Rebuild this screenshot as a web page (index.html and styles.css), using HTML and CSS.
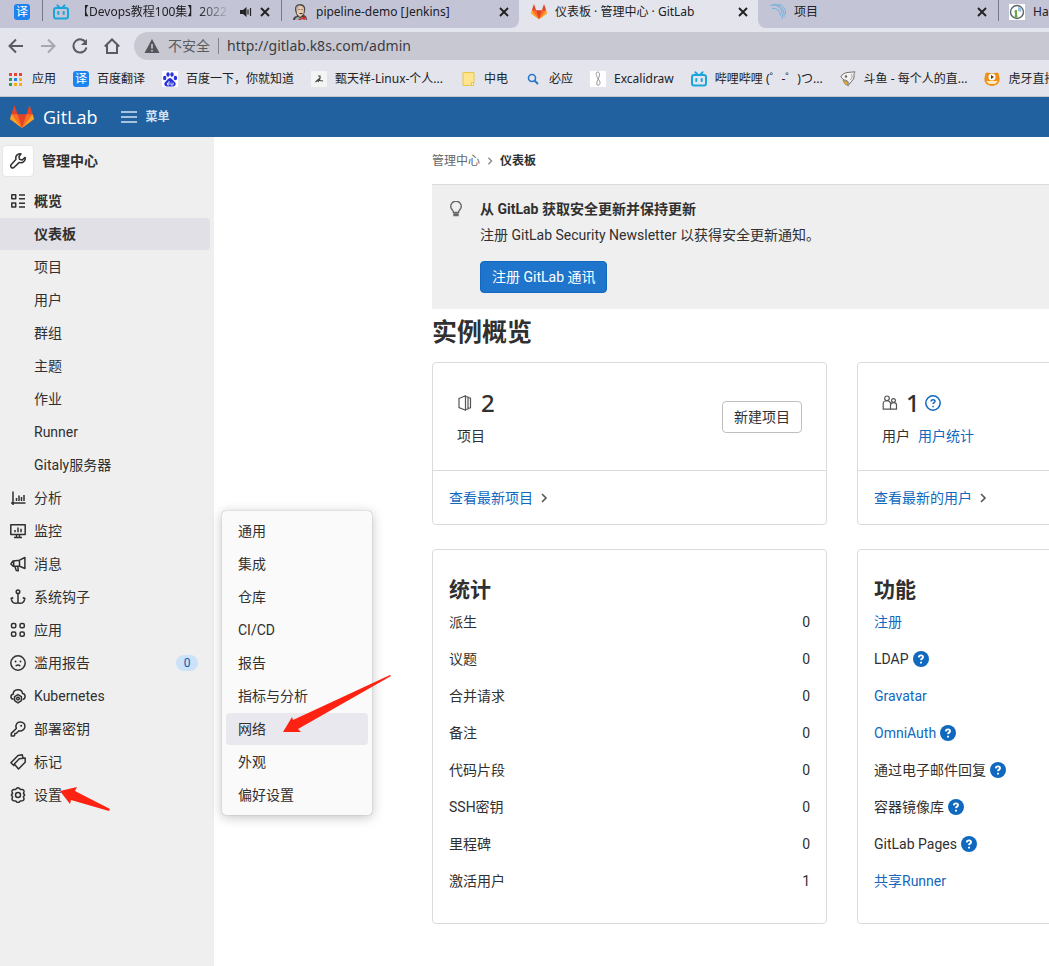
FILE: index.html
```html
<!DOCTYPE html>
<html lang="zh-CN">
<head>
<meta charset="utf-8">
<title>仪表板 · 管理中心 · GitLab</title>
<link rel="stylesheet" href="styles.css">
</head>
<body>
<svg class="sprite" aria-hidden="true">
  <symbol id="tanuki" viewBox="0 0 36 36">
    <path fill="#e24329" d="M2 14l9.38 9v-9l-4-12.28c-.2-.63-1.18-.63-1.38 0z"/>
    <path fill="#e24329" d="M34 14l-9.38 9v-9l4-12.28c.2-.63 1.18-.63 1.38 0z"/>
    <path fill="#e24329" d="M18 34.4 3 14h30z"/>
    <path fill="#fc6d26" d="M18 34.4 11.4 14H2l4 11zM18 34.4 24.6 14H34l-4 11z"/>
    <path fill="#fca326" d="M2 14 .1 20.2c-.2.6 0 1.2.5 1.5L18 34.4zM34 14l1.9 6.2c.2.6 0 1.2-.5 1.5L18 34.4z"/>
  </symbol>
  <symbol id="close" viewBox="0 0 10 10"><path d="M1 1l8 8M9 1L1 9" fill="none" stroke="#222" stroke-width="1.9"/></symbol>
  <symbol id="bili" viewBox="0 0 16 16"><g fill="none" stroke="#1aa6dc" stroke-width="2" stroke-linecap="round"><rect x="1" y="4" width="14" height="10.5" rx="2"/><path d="M4.500 1.300 6.500 3.500M11.500 1.300 9.500 3.500M5.300 8v2M10.700 8v2"/></g></symbol>
  <symbol id="chevron" viewBox="0 0 8 10"><path d="M2 1l4 4-4 4" fill="none" stroke="currentColor" stroke-width="1.6"/></symbol>
  <symbol id="wrench" viewBox="0 0 16 16"><path d="M11 .9a4.200 4.200 0 0 0-5 5.400L1.300 11.500a1.900 1.900 0 0 0 2.900 2.800L9.300 9.400a4.300 4.300 0 0 0 5.800-5L12.200 7 9.500 6.300 8.900 3.700z"/></symbol>
  <symbol id="overview" viewBox="0 0 16 16"><path d="M1.800 1.800h3.900v3.900H1.800zM1.800 10h3.900v3.900H1.800zM9 2h6M9 5.700h6M9 10.200h6M9 13.900h6"/></symbol>
  <symbol id="chart" viewBox="0 0 16 16"><path d="M3 1.500v13.500M1 13h14.500M6.500 8v3M9 5.500v5.500M11.500 7v4M14 5v6"/></symbol>
  <symbol id="monitor" viewBox="0 0 16 16"><path d="M.8 1.800h14.400v9.700H.8zM6.500 11.500v2.500M9.500 11.500v2.500M4 14.500h8M5 7v2.200M8 4.500v4.700M11 5.800v3.400"/></symbol>
  <symbol id="horn" viewBox="0 0 16 16"><path d="M14.900 1.500v11L9.700 10.300H3.200L.9 7.900 3 5l6.500-.8zM9.500 4.300v6M3.700 5.200v5M4.800 10.500l1.500 4 2 .2-.5-4"/></symbol>
  <symbol id="anchor" viewBox="0 0 16 16"><circle cx="8" cy="2.700" r="1.800"/><path d="M8 4.500v9.600M1.500 8.500v2c.3 2.500 2.500 3.800 4.500 3.800 1 0 1.500-.3 2-.8.500.5 1 .8 2 .8 2 0 4.200-1.300 4.500-3.800v-2M.6 10l2.600-1.500M15.400 10l-2.600-1.500"/></symbol>
  <symbol id="apps" viewBox="0 0 16 16"><rect x="1.500" y="1.500" width="4.300" height="4.300" rx="1.500"/><rect x="10" y="1.500" width="4.300" height="4.300" rx="1.500"/><rect x="1.500" y="10" width="4.300" height="4.300" rx="1.500"/><rect x="10" y="10" width="4.300" height="4.300" rx="1.500"/></symbol>
  <symbol id="frown" viewBox="0 0 16 16"><circle cx="8" cy="8" r="7.200"/><path d="M5.500 6.500h.1M10.400 6.500h.1" stroke-width="1.800" stroke-linecap="round"/><path d="M5.800 11.300c.6-1.600 3.800-1.600 4.400 0"/></symbol>
  <symbol id="cloud" viewBox="0 0 16 16"><path d="M3.600 11.300C.2 11 .1 6.700 3.200 6.300 3.200.6 11.800.2 12.500 5.400c3.300.3 3.600 5.300.2 6M8 6.600l3.400 2v4L8 14.900l-3.400-2.300v-4z"/><circle cx="8" cy="10.600" r="1.300"/></symbol>
  <symbol id="key" viewBox="0 0 16 16"><path d="M6.300 7.500C4.900 3.400 7.500.9 10.200.9c3 0 5 2.200 4.700 4.900-.3 2.900-3.100 4.700-6 3.900l-2.500 2.500-1.500.2-.3 1.900-1 .8H1.300v-2.700z"/><path d="M11.100 4.700h.1" stroke-width="2" stroke-linecap="round"/></symbol>
  <symbol id="labels" viewBox="0 0 16 16"><path d="M9.300 4.700 4.300 10l4.200 5 6.700-6.800V4zM12.300 6.500h.1M4.300 12 .9 8.800 8 1.400l4.300-.6.700 3.200"/></symbol>
  <symbol id="gear" viewBox="0 0 16 16"><path d="M6.500 1.500C7.300.6 8.700.6 9.500 1.500l.7.9 2.200.1c1.200.2 1.900 1.400 1.500 2.600l-.5 1.200 1.200 1.700-1.200 1.900.5 1.300c.4 1.100-.3 2.300-1.500 2.500l-2.200.2-.7.900c-.8.900-2.200.9-3 0l-.7-.9-2.200-.2C2.400 13.500 1.700 12.300 2.100 11.200l.5-1.300L1.400 8l1.200-1.700-.5-1.200C1.700 3.900 2.400 2.700 3.600 2.500l2.200-.1z"/><circle cx="8" cy="8" r="2.500"/></symbol>
  <symbol id="help" viewBox="0 0 16 16"><circle cx="8" cy="8" r="8" fill="#1068bf"/><path d="M5.800 6.300C6.100 3.500 10.400 3.900 10 6.300c-.2 1.400-1.900 1.300-2 2.800M8 10.700v1.700" fill="none" stroke="#fff" stroke-width="1.900"/></symbol>
  <symbol id="help-o" viewBox="0 0 16 16"><g fill="none" stroke="#1068bf" stroke-width="1.500"><circle cx="8" cy="8" r="7.200"/><path d="M5.900 6.500C6.200 4 10.200 4.200 10 6.400c-.2 1.300-1.900 1.300-2 2.600M8 10.700v1.600"/></g></symbol>
</svg>

<header class="browser">
  <nav class="tabs" aria-label="标签页">
    <div class="tab pinned"><span class="translate">译</span></div>
    <div class="tab">
      <svg class="i16"><use href="#bili"/></svg><span class="title long">【Devops教程100集】2022</span>
      <svg class="speaker" viewBox="0 0 12 12"><path d="M0 4h3l3.500-3v10L3 8H0z" fill="#222"/><path d="M8 3.500v5M10.500 2v8" stroke="#222" fill="none" stroke-width="1.200"/></svg>
      <button class="x" aria-label="关闭"><svg><use href="#close"/></svg></button>
    </div>
    <div class="tab last">
      <svg class="i16" viewBox="0 0 16 16"><path d="M1 16c0-3 2-4 4-4L3.500 8C2 3 4 0 8 0s6 3 5 7l-1 4c2 1 3 2 3 5z" fill="#4a4640"/><path d="M4.500 6C4 1 11.500 0 12 5l-.5 5L8 13l-3-3z" fill="#e8c9ad"/><path d="M4 5C4 2 6 1 9 1 6 2 5.500 4 5 7z" fill="#a9a49a"/><path d="M3 16c0-2 2-3 3-3l2 1 3-1c2 0 3 1 3 3z" fill="#9eb3bd"/><path d="M8 14l5-1.500V16zM8 14l-2 2h4z" fill="#cf2d2d"/><path d="M6.500 5.500h1M9.500 5.500h1M7.500 9.500h3" stroke="#333" fill="none"/></svg>
      <span class="title">pipeline-demo [Jenkins]</span><button class="x" aria-label="关闭"><svg><use href="#close"/></svg></button>
    </div>
    <div class="tab active">
      <svg class="i16"><use href="#tanuki"/></svg><span class="title">仪表板 · 管理中心 · GitLab</span><button class="x" aria-label="关闭"><svg><use href="#close"/></svg></button>
    </div>
    <div class="tab after">
      <svg class="i16" viewBox="0 0 16 16"><path d="M0 1.500c8-2.500 14 4 12 13.500M3 .5c8-.5 12 6 11 12.500M8 0c5 1 8 5 7.500 10M2 4.500c5-.5 8 2 8.500 7.500" fill="none" stroke="#6baed8" stroke-width=".9"/></svg>
      <span class="title">项目</span><button class="x" aria-label="关闭"><svg><use href="#close"/></svg></button>
    </div>
    <div class="tab">
      <svg class="i16" viewBox="0 0 16 16"><path fill="#fff" d="M0 0h16v16H0z"/><circle cx="8" cy="8" r="6.500" fill="none" stroke="#58666b" stroke-width="1.400"/><path d="M7 6v7M5.500 7.500H8M5.500 12.500h3" stroke="#69a843" stroke-width="2"/><path d="M9 3l4 1-1 4-3-1z" fill="#9bbfe0"/></svg>
      <span class="title">Ha</span>
    </div>
  </nav>
  <div class="toolbar">
    <button aria-label="后退"><svg viewBox="0 0 16 16"><path d="M15 8H2M8 1.500 1.500 8 8 14.500"/></svg></button>
    <button aria-label="前进" class="dim"><svg viewBox="0 0 16 16"><path d="M1 8h13M8 1.500 14.500 8 8 14.500"/></svg></button>
    <button aria-label="刷新"><svg viewBox="0 0 16 16"><path d="M14 5A6.600 6.600 0 1 0 14.500 9.500"/><path d="M15 1v6H9z" fill="#5a5b60" stroke="none"/></svg></button>
    <button aria-label="主页"><svg viewBox="0 0 16 16"><path d="M.8 8.500 8 1.500l7.200 7M3 7v8h10V7"/></svg></button>
    <div class="address">
      <svg class="warn" viewBox="0 0 16 16"><path d="M8 1l7.500 14H.5z" fill="#55565b"/><path d="M8 6v4.500M8 12v1.600" stroke="#c8c8d2" stroke-width="1.600"/></svg>
      <span class="unsafe">不安全</span>
      <input type="text" aria-label="地址" value="http://gitlab.k8s.com/admin">
    </div>
  </div>
  <nav class="bookmarks" aria-label="书签">
    <a href="#"><svg class="grid9" viewBox="0 0 13 13"><path d="M0 0h3v3H0zM5 0h3v3H5zM10 0h3v3h-3z" fill="#e94335"/><path d="M0 5h3v3H0zM0 10h3v3H0z" fill="#2f9e50"/><path d="M5 5h3v3H5z" fill="#2d7ff0"/><path d="M10 5h3v3h-3zM5 10h3v3H5zM10 10h3v3h-3z" fill="#f5ae13"/></svg>应用</a>
    <a href="#"><span class="translate">译</span>百度翻译</a>
    <a href="#"><svg class="i16" viewBox="0 0 16 16"><path fill="#fff" d="M0 0h16v16H0z"/><g fill="#2a32dc"><ellipse cx="2.700" cy="7" rx="1.700" ry="2.200"/><ellipse cx="6" cy="3.500" rx="1.700" ry="2.300"/><ellipse cx="10" cy="3.500" rx="1.700" ry="2.300"/><ellipse cx="13.400" cy="7" rx="1.700" ry="2.200"/><path d="M8 7c2 0 3 2.500 4.800 4 2 2 .5 4.600-2 4.400H5.200c-2.500.2-4-2.400-2-4.400C5 9.500 6 7 8 7z"/></g><path d="M7 10v4H5.500v-2H7M9 11.500V14h2v-2.500" stroke="#fff" stroke-width=".8" fill="none"/></svg>百度一下，你就知道</a>
    <a href="#"><svg class="i16" viewBox="0 0 16 16"><path fill="#f4f4f4" d="M0 0h16v16H0z"/><path d="M7 5h2v3M4.500 11 8 8l1 1.500 3 .5M8.500 8 7 11" stroke="#444" fill="none" stroke-width="1.200"/></svg>甄天祥-Linux-个人...</a>
    <a href="#"><svg class="i16" viewBox="0 0 16 16"><path d="M3 1.500h11v9.700l-1 3.300H3z" fill="#ffe58f" stroke="#e9c548"/><path d="M11.500 11.500h2v3h-2z" fill="#fff3c0" stroke="#e9c548"/></svg>中电</a>
    <a href="#"><svg class="i16" viewBox="0 0 16 16"><circle cx="7" cy="7" r="3.500" fill="none" stroke="#2777c9" stroke-width="1.600"/><path d="M9.500 9.500 13 13" stroke="#2777c9" stroke-width="2"/></svg>必应</a>
    <a href="#"><svg class="i16" viewBox="0 0 16 16"><path fill="#fff" d="M0 0h16v16H0z"/><path d="M7 1c3 0 3 2 2 5S6 11 7 14c3 1 4-2 2-5S5 3 7 1z" fill="none" stroke="#999"/></svg>Excalidraw</a>
    <a href="#"><svg class="i16"><use href="#bili"/></svg>哔哩哔哩 (゜-゜)つ...</a>
    <a href="#"><svg class="i16" viewBox="0 0 16 16"><path d="M.8 6C2 3 5 2 7 1.500L15 .8C13 3 15 5 13.500 8L9 13.500C9 10 6 9 4 9z" fill="#f2f2f2" stroke="#77706c"/><path d="M3 9.500l4 1 1.500 4.500L5 13z" fill="#f0b422" stroke="#77706c" stroke-width=".7"/><path d="M11 3c2 2 1 4-1 6" fill="none" stroke="#999"/><circle cx="6" cy="5.500" r="1.200" fill="#666"/></svg>斗鱼 - 每个人的直...</a>
    <a href="#"><svg class="i16" viewBox="0 0 16 16"><path d="M1 5c0-4 2-4 4-3h6c2-1 4-1 4 3 2 5-1 10-7 10S-1 10 1 5z" fill="#ef8f16"/><circle cx="8" cy="6" r="3.500" fill="#fff"/><path d="M7 4l3 2-3 2z" fill="#6b2d08"/><path d="M2 10h12l-3 3H5z" fill="#ffe9bd"/></svg>虎牙直播</a>
  </nav>
</header>

<header class="navbar">
  <a class="brand" href="#"><svg><use href="#tanuki"/></svg>GitLab</a>
  <button class="menu-btn"><svg viewBox="0 0 16 12"><path d="M0 1h16M0 6h16M0 11h16" stroke="currentColor" stroke-width="1.300"/></svg>菜单</button>
</header>

<div class="page">
  <aside class="sidebar">
    <a class="context" href="#"><span class="avatar"><svg class="ico"><use href="#wrench"/></svg></span>管理中心</a>
    <ul class="nav">
      <li><a href="#" class="bold"><svg class="ico"><use href="#overview"/></svg>概览</a></li>
      <li><a href="#" class="sub bold current">仪表板</a></li>
      <li><a href="#" class="sub">项目</a></li>
      <li><a href="#" class="sub">用户</a></li>
      <li><a href="#" class="sub">群组</a></li>
      <li><a href="#" class="sub">主题</a></li>
      <li><a href="#" class="sub">作业</a></li>
      <li><a href="#" class="sub">Runner</a></li>
      <li><a href="#" class="sub">Gitaly服务器</a></li>
      <li><a href="#"><svg class="ico"><use href="#chart"/></svg>分析</a></li>
      <li><a href="#"><svg class="ico"><use href="#monitor"/></svg>监控</a></li>
      <li><a href="#"><svg class="ico"><use href="#horn"/></svg>消息</a></li>
      <li><a href="#"><svg class="ico"><use href="#anchor"/></svg>系统钩子</a></li>
      <li><a href="#"><svg class="ico"><use href="#apps"/></svg>应用</a></li>
      <li><a href="#"><svg class="ico"><use href="#frown"/></svg>滥用报告<span class="badge">0</span></a></li>
      <li><a href="#"><svg class="ico"><use href="#cloud"/></svg>Kubernetes</a></li>
      <li><a href="#"><svg class="ico"><use href="#key"/></svg>部署密钥</a></li>
      <li><a href="#"><svg class="ico"><use href="#labels"/></svg>标记</a></li>
      <li class="settings"><a href="#"><svg class="ico"><use href="#gear"/></svg>设置</a>
        <ul class="flyout">
          <li><a href="#">通用</a></li>
          <li><a href="#">集成</a></li>
          <li><a href="#">仓库</a></li>
          <li><a href="#">CI/CD</a></li>
          <li><a href="#">报告</a></li>
          <li><a href="#">指标与分析</a></li>
          <li><a href="#" class="hover">网络</a></li>
          <li><a href="#">外观</a></li>
          <li><a href="#">偏好设置</a></li>
        </ul>
        <svg class="arrow arrow-long" viewBox="0 0 108 58" aria-hidden="true"><path d="M0 57 9 42l1 3L107 0l1 1L15 54l3 3z"/></svg>
        <svg class="arrow arrow-short" viewBox="0 0 50 24" aria-hidden="true"><path d="M0 4 17 0l-2 4 35 18-1 2-38-11-1 4z"/></svg>
      </li>
    </ul>
  </aside>

  <main class="main">
    <nav class="crumbs" aria-label="面包屑"><a href="#">管理中心</a><svg><use href="#chevron"/></svg><a href="#" class="here">仪表板</a></nav>
    <section class="banner">
      <svg class="bulb" viewBox="0 0 16 16"><path d="M5.500 11.500C5.500 9 2.700 8.300 2.700 5.500a5.300 5.300 0 0 1 10.600 0c0 2.800-2.800 3.500-2.800 6z"/><path d="M6 13h4v1.500H6z"/></svg>
      <div>
        <h2>从 GitLab 获取安全更新并保持更新</h2>
        <p>注册 GitLab Security Newsletter 以获得安全更新通知。</p>
        <button class="primary">注册 GitLab 通讯</button>
      </div>
    </section>
    <h1>实例概览</h1>
    <div class="cards">
      <section class="card">
        <div class="summary">
          <div>
            <div class="count"><svg viewBox="0 0 16 16"><path d="M2 3.500 8.500.8v14.400L2 12.500zM8.500 1.500 11 2v12l-2.500.5M11 2.500l2.500.8v9.400l-2.500.8"/></svg>2</div>
            <div class="label">项目</div>
          </div>
          <button class="plain">新建项目</button>
        </div>
        <div class="foot"><a href="#">查看最新项目</a><svg><use href="#chevron"/></svg></div>
      </section>
      <section class="card">
        <div class="summary">
          <div>
            <div class="count"><svg viewBox="0 0 16 16"><circle cx="5" cy="3.300" r="2.300"/><path d="M1.200 14.200V8.500C1.200 4.800 8.500 4.800 8.500 8.500v5.700z"/><circle cx="11.500" cy="5.500" r="1.900"/><path d="M8.500 14.200h6V10c0-3-5-3.300-6-.5"/></svg>1<a href="#" aria-label="帮助"><svg class="help"><use href="#help-o"/></svg></a></div>
            <div class="label">用户<a href="#">用户统计</a></div>
          </div>
        </div>
        <div class="foot"><a href="#">查看最新的用户</a><svg><use href="#chevron"/></svg></div>
      </section>
      <section class="card details">
        <h3>统计</h3>
        <dl>
          <dt>派生</dt><dd>0</dd>
          <dt>议题</dt><dd>0</dd>
          <dt>合并请求</dt><dd>0</dd>
          <dt>备注</dt><dd>0</dd>
          <dt>代码片段</dt><dd>0</dd>
          <dt>SSH密钥</dt><dd>0</dd>
          <dt>里程碑</dt><dd>0</dd>
          <dt>激活用户</dt><dd>1</dd>
        </dl>
      </section>
      <section class="card details">
        <h3>功能</h3>
        <ul>
          <li><a href="#">注册</a></li>
          <li>LDAP<a href="#" aria-label="帮助"><svg class="help"><use href="#help"/></svg></a></li>
          <li><a href="#">Gravatar</a></li>
          <li><a href="#">OmniAuth</a><a href="#" aria-label="帮助"><svg class="help"><use href="#help"/></svg></a></li>
          <li>通过电子邮件回复<a href="#" aria-label="帮助"><svg class="help"><use href="#help"/></svg></a></li>
          <li>容器镜像库<a href="#" aria-label="帮助"><svg class="help"><use href="#help"/></svg></a></li>
          <li>GitLab Pages<a href="#" aria-label="帮助"><svg class="help"><use href="#help"/></svg></a></li>
          <li><a href="#">共享Runner</a></li>
        </ul>
      </section>
    </div>
  </main>
</div>
</body>
</html>
```

FILE: styles.css
```css
* { box-sizing: border-box; }
body {
  margin: 0;
  min-height: 100vh;
  display: flex;
  flex-direction: column;
  overflow-x: hidden;
  background: #fff;
  color: #303030;
  font: 14px/20px Roboto, "Noto Sans CJK SC", sans-serif;
}
ul, dl, dd, h1, h2, h3, p { margin: 0; padding: 0; }
ul { list-style: none; }
a { color: #1068bf; text-decoration: none; }
button { font: inherit; cursor: pointer; }
svg { display: block; flex: none; }
.sprite { position: absolute; width: 0; height: 0; }
.i16 { width: 16px; height: 16px; }

/* Browser frame */
.browser {
  background: #e3e4ec;
  color: #202124;
  font: 12px/20px "Noto Sans", "Noto Sans CJK SC", sans-serif;
  border-bottom: 1px solid #c6c6cb;
  overflow: hidden;
}
.tabs { display: flex; height: 28px; overflow: hidden; }
.tab {
  flex: none;
  width: 239px;
  display: flex;
  align-items: center;
  gap: 8px;
  padding: 0 10px 4px 11px;
  background: #c4c4d7;
  border-left: 1px solid #c4c4d7;
  white-space: nowrap;
}
.tab + .tab:not(.active):not(.after) { background: linear-gradient(#777883, #777883) 0 0 / 1px 21px no-repeat #c4c4d7; }
.tab.pinned { width: 41px; padding-left: 13px; }
.tab.last { border-bottom-right-radius: 8px; }
.tab.active { background: #e3e4ec; border-color: #e3e4ec; }
.tab.after { border-bottom-left-radius: 8px; }
.tab .title { flex: 1; overflow: hidden; }
.tab .long { margin-right: 2px; mask-image: linear-gradient(90deg, #000 80%, transparent); }
.speaker { width: 12px; height: 12px; }
.x { padding: 0; border: 0; background: none; }
.x svg { width: 10px; height: 10px; }
.translate {
  width: 16px;
  height: 16px;
  border-radius: 3px;
  background: #1b84f0;
  color: #fff;
  font-size: 12px;
  line-height: 16px;
  text-align: center;
}
.toolbar { display: flex; align-items: center; height: 36px; padding-left: 8px; }
.toolbar button { padding: 0; border: 0; background: none; margin-right: 16px; }
.toolbar button svg { width: 16px; height: 16px; fill: none; stroke: #5a5b60; stroke-width: 2; }
.toolbar .dim svg { stroke: #a7a8af; }
.toolbar .address {
  flex: 1;
  display: flex;
  align-items: center;
  height: 28px;
  margin-left: -2px;
  padding-left: 10px;
  border-radius: 14px 0 0 14px;
  background: #c8c8d2;
}
.warn { width: 16px; height: 16px; }
.unsafe { margin-left: 8px; padding-right: 8px; border-right: 1px solid #85868d; font-size: 14px; line-height: 16px; color: #5a5b60; }
.address input { flex: 1; border: 0; padding: 0 8px; background: none; color: #3b3c42; font: 14px/20px "Noto Sans", sans-serif; outline: none; }
.bookmarks { display: flex; align-items: center; gap: 17px; height: 32px; padding: 0 0 2px 9px; white-space: nowrap; }
.bookmarks a { flex: none; display: flex; align-items: center; gap: 8px; color: #202124; }
.grid9 { width: 13px; height: 13px; margin-right: 2px; }

/* GitLab header */
.navbar { display: flex; align-items: center; gap: 24px; height: 40px; padding-left: 10px; background: #2161a0; color: #fff; }
.brand { display: flex; align-items: center; gap: 9px; color: #fff; font: 18px/24px "Open Sans", sans-serif; }
.brand svg { width: 24px; height: 24px; }
.menu-btn { display: flex; align-items: center; gap: 8px; padding: 0; border: 0; background: none; color: #d3e2f2; font-size: 12px; font-weight: 700; }
.menu-btn svg { width: 16px; height: 12px; }

.page { flex: 1; display: flex; }

/* Sidebar */
.sidebar { flex: none; width: 214px; padding-top: 8px; background: #efefef; }
.context { display: flex; align-items: center; gap: 8px; height: 32px; padding-left: 2px; margin-bottom: 8px; color: #303030; font-weight: 700; }
.avatar { display: grid; place-items: center; width: 32px; height: 32px; border: 1px solid #e6e6e6; border-radius: 4px; background: #fff; }
.ico { width: 16px; height: 16px; fill: none; stroke: #303030; stroke-width: 1.5; stroke-linejoin: round; }
.nav a { display: flex; align-items: center; gap: 8px; height: 32px; margin: 0 4px 1px 0; padding: 0 12px 0 10px; border-radius: 0 4px 4px 0; color: #303030; }
.nav a.sub { padding-left: 34px; }
.nav .bold { font-weight: 700; }
.nav .current { background: #e1e0e6; }
.badge { margin-left: auto; width: 22px; border-radius: 8px; background: #cbe2f9; color: #0b5cad; font-size: 12px; line-height: 16px; text-align: center; }
.settings { position: relative; }
.nav .flyout { position: absolute; left: 222px; bottom: -4px; width: 150px; padding: 4px 4px 3px; border-radius: 4px; background: #fafafa; box-shadow: 0 0 1px #888, 0 2px 12px rgba(0, 0, 0, .25); }
.nav .flyout a { margin-right: 0; padding: 0 12px; border-radius: 4px; }
.nav .flyout .hover { background: #e9e8ee; }
.arrow { position: absolute; fill: #fe2212; pointer-events: none; }
.arrow-long { left: 283px; bottom: 78px; width: 108px; height: 58px; }
.arrow-short { left: 60px; bottom: 0; width: 50px; height: 24px; }

/* Dashboard */
.main { flex: 1; min-width: 0; padding-left: 218px; overflow: hidden; }
.crumbs { display: flex; align-items: center; gap: 6px; height: 48px; border-bottom: 1px solid #dbdbdb; font-size: 12px; }
.crumbs a { color: #666; }
.crumbs svg { width: 8px; height: 8px; color: #888; }
.crumbs .here { color: #303030; font-weight: 700; }
.banner { display: flex; gap: 16px; padding: 14px 16px 16px; background: #efefef; }
.bulb { width: 16px; height: 16px; margin-top: 2px; fill: none; stroke: #666; stroke-width: 1.4; }
.banner h2 { font-size: 14px; line-height: 20px; }
.banner p { margin: 6px 0 16px; }
.primary { height: 32px; padding: 0 11px; border: 1px solid #1068bf; border-radius: 4px; background: #1f75cb; color: #fff; }
h1 { font-size: 25px; line-height: 32px; margin: 8px 0 13px; }
.cards { display: grid; grid-template-columns: repeat(3, 395px); gap: 24px 30px; }
.card { border: 1px solid #dbdbdb; border-radius: 4px; }
.summary { display: flex; justify-content: space-between; align-items: center; height: 108px; padding: 0 24px; border-bottom: 1px solid #dbdbdb; }
.count { display: flex; align-items: center; gap: 8px; font: 500 24px/30px "Noto Sans", sans-serif; }
.count svg { width: 16px; height: 16px; fill: none; stroke: #555; stroke-width: 1.2; }
.count a { margin-left: -3px; }
.label { margin-top: 8px; }
.label a { margin-left: 8px; }
.plain { height: 32px; padding: 0 11px; border: 1px solid #bfbfbf; border-radius: 4px; background: #fff; color: #303030; }
.foot { display: flex; align-items: center; gap: 7px; height: 53px; padding: 0 16px; }
.foot svg { width: 8px; height: 10px; color: #555; }
.details { grid-row: 2; height: 375px; padding: 24px 16px 0; }
.details h3 { font-size: 21px; line-height: 32px; margin-bottom: 6px; }
.details dl { display: grid; grid-template-columns: 1fr auto; row-gap: 17px; }
.details li { display: flex; align-items: center; gap: 4px; margin-bottom: 17px; }
.help { width: 16px; height: 16px; }
```
